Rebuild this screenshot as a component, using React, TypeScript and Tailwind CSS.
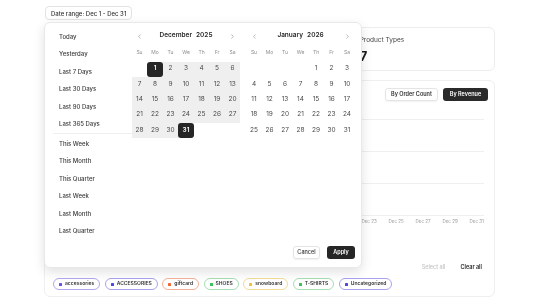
import { ChevronLeft, ChevronRight } from "lucide-react";

const presetsA = ["Today", "Yesterday", "Last 7 Days", "Last 30 Days", "Last 90 Days", "Last 365 Days"];
const presetsB = ["This Week", "This Month", "This Quarter", "Last Week", "Last Month", "Last Quarter"];
const weekdays = ["Su", "Mo", "Tu", "We", "Th", "Fr", "Sa"];

const tags = [
  { label: "accessories", border: "border-[#b3a6ee]", dot: "bg-[#6b4ee6]" },
  { label: "ACCESSORIES", border: "border-[#a9a3ee]", dot: "bg-[#4f46e5]" },
  { label: "giftcard", border: "border-[#f3b29b]", dot: "bg-[#f2683a]" },
  { label: "SHOES", border: "border-[#a6dfb3]", dot: "bg-[#38c05a]" },
  { label: "snowboard", border: "border-[#f3dc97]", dot: "bg-[#f2c230]" },
  { label: "T-SHIRTS", border: "border-[#a6dfb3]", dot: "bg-[#38c05a]" },
  { label: "Uncategorized", border: "border-[#a9a3ee]", dot: "bg-[#4f46e5]" },
];

// build a month grid: leading blanks + days
function monthCells(offset: number, days: number) {
  const cells: (number | null)[] = [];
  for (let i = 0; i < offset; i++) cells.push(null);
  for (let d = 1; d <= days; d++) cells.push(d);
  while (cells.length % 7 !== 0) cells.push(null);
  return cells;
}

function Month({ name, year, offset, days, rangeFrom, rangeTo }: {
  name: string; year: number; offset: number; days: number; rangeFrom?: number; rangeTo?: number;
}) {
  const cells = monthCells(offset, days);
  return (
    <div className="w-[108px] flex flex-col">
      <div className="h-[12px] flex items-center justify-between">
        <div className="w-[15px] flex justify-center text-[#8a8a8a]"><ChevronLeft size={7} strokeWidth={2} /></div>
        <div className="flex gap-[4px] text-[6.5px] font-semibold text-[#2a2a2a]">
          <span>{name}</span>
          <span>{year}</span>
        </div>
        <div className="w-[15px] flex justify-center text-[#8a8a8a]"><ChevronRight size={7} strokeWidth={2} /></div>
      </div>
      <div className="mt-[5px] h-[12px] grid grid-cols-[15px_16px_15px_16px_15px_16px_15px] items-center">
        {weekdays.map(w => (
          <span key={w} className="text-center text-[5px] text-[#8f8f8f]">{w}</span>
        ))}
      </div>
      <div className="mt-[2.5px] grid grid-cols-[15px_16px_15px_16px_15px_16px_15px]">
        {cells.map((d, i) => {
          const inRange = d !== null && rangeFrom !== undefined && rangeTo !== undefined && d >= rangeFrom && d <= rangeTo;
          const isStart = d === rangeFrom;
          const isEnd = d === rangeTo;
          let wrap = "";
          if (inRange && !isStart && !isEnd) wrap = "bg-[#efefef]";
          if (isStart) wrap = "bg-[linear-gradient(to_right,transparent_50%,#efefef_50%)]";
          if (isEnd) wrap = "bg-[linear-gradient(to_right,#efefef_50%,transparent_50%)]";
          return (
            <div key={i} className={`h-[15.4px] ${wrap}`}>
              {d !== null && (
                <div className={`h-full flex items-center justify-center text-[6.5px] ${isStart || isEnd ? "bg-[#262626] text-white font-semibold rounded-[3px]" : "text-[#4a4a4a]"}`}>
                  {d}
                </div>
              )}
            </div>
          );
        })}
      </div>
    </div>
  );
}

const axisLabels = Array.from({ length: 16 }, (_, i) => `Dec ${1 + i * 2}`);

export default function App() {
  return (
    <div className="relative w-[542px] h-[305px] overflow-hidden bg-white font-['Inter',sans-serif] text-[#2a2a2a] will-change-transform">
      {/* page behind the popover */}
      <div className="pl-[44px] pt-[6px] w-[495px]">
        <div className="ml-[1px] flex w-fit items-center h-[14px] px-[5px] border border-[#e2e2e2] rounded-[4px] text-[6px] font-medium text-[#333]">
          Date range: Dec 1 - Dec 31
        </div>

        {/* stat cards; the first two sit under the popover */}
        <div className="mt-[7px] grid grid-cols-3 gap-[6px] h-[44px]">
          <div className="border border-[#ededed] rounded-[6px]" />
          <div className="border border-[#ededed] rounded-[6px]" />
          <div className="border border-[#ededed] rounded-[6px] pl-[10px] pt-[8px]">
            <div className="text-[6.5px] leading-[8px] text-[#444]">Product Types</div>
            <div className="mt-[5px] text-[13px] leading-[14px] font-bold text-[#1a1a1a]">7</div>
          </div>
        </div>

        <div className="mt-[9px] h-[217px] border border-[#efefef] rounded-[6px] flex flex-col">
          <div className="mt-[7px] h-[13px] pr-[6px] flex items-center justify-end">
            <div className="flex gap-[5px]">
              <button className="h-[13px] w-[53px] rounded-[3px] border border-[#e4e4e4] shadow-[0_1px_2px_rgba(0,0,0,0.06)] text-[5.5px] font-semibold text-[#333]">By Order Count</button>
              <button className="h-[13px] w-[45px] rounded-[3px] bg-[#2a2a2a] text-[5.5px] font-semibold text-white">By Revenue</button>
            </div>
          </div>

          <div className="mt-[18px] ml-[40px] mr-[10px] h-[97px] flex flex-col justify-between">
            {[0, 1, 2, 3].map(i => <div key={i} className="h-px bg-[#efefef]" />)}
          </div>
          <div className="mt-[3px] ml-[40px] mr-[10px] flex justify-between text-[4.5px] leading-[6px] text-[#9a9a9a]">
            {axisLabels.map(l => <span key={l}>{l}</span>)}
          </div>

          <div className="mt-[37px] pr-[12px] h-[10px] flex items-center justify-end gap-[15px] text-[5.5px]">
            <span className="text-[#c4c4c4] font-medium">Select all</span>
            <span className="text-[#2a2a2a] font-semibold">Clear all</span>
          </div>

          <div className="mt-[6px] pl-[8px] flex gap-[4.5px]">
            {tags.map(t => (
              <div key={t.label} className={`h-[12px] flex items-center gap-[3px] px-[5px] rounded-full border ${t.border} text-[5px] font-semibold text-[#333]`}>
                <span className={`w-[3px] h-[3px] rounded-[0.5px] ${t.dot}`} />
                {t.label}
              </div>
            ))}
          </div>
        </div>
      </div>

      {/* date range popover */}
      <div className="absolute left-[44px] top-[22px] w-[318px] h-[246px] bg-white border border-[#e8e8e8] rounded-[6px] shadow-[0_4px_12px_rgba(0,0,0,0.12)] flex flex-col will-change-transform">
        <div className="flex">
          <div className="w-[87px] pt-[4.5px] pl-[8px]">
            {presetsA.map(p => (
              <div key={p} className="h-[17.5px] flex items-center px-[6px] text-[6px] font-medium text-[#3a3a3a]">{p}</div>
            ))}
            <div className="my-[0.5px] h-px bg-[#efefef]" />
            {presetsB.map(p => (
              <div key={p} className="h-[17.5px] flex items-center px-[6px] text-[6px] font-medium text-[#3a3a3a]">{p}</div>
            ))}
          </div>
          <div className="pt-[7px] flex gap-[6.5px]">
            <Month name="December" year={2025} offset={1} days={31} rangeFrom={1} rangeTo={31} />
            <Month name="January" year={2026} offset={4} days={31} />
          </div>
        </div>
        <div className="mt-auto pb-[8px] pr-[6px] flex justify-end gap-[7px]">
          <button className="h-[13px] w-[27px] rounded-[3px] border border-[#e4e4e4] shadow-[0_1px_2px_rgba(0,0,0,0.06)] text-[5.5px] font-medium text-[#333]">Cancel</button>
          <button className="h-[13px] w-[28px] rounded-[3px] bg-[#262626] text-[5.5px] font-semibold text-white">Apply</button>
        </div>
      </div>
    </div>
  );
}
